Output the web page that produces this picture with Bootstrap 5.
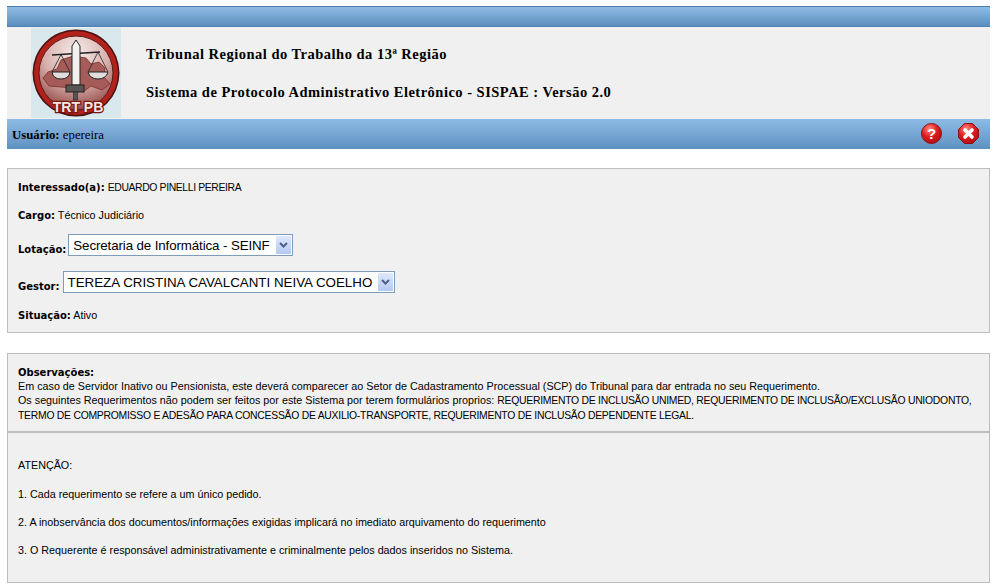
<!DOCTYPE html>
<html lang="pt">

<head>
    <meta charset="UTF-8">
    <title>SISPAE</title>
    <link href="https://cdn.jsdelivr.net/npm/bootstrap@5.3.2/dist/css/bootstrap.min.css" rel="stylesheet">
    <style>
        body {
            background: #fff;
            color: #000;
            font-family: "Liberation Sans", Arial, sans-serif;
            font-size: 10.77px;
            line-height: 13px;
            padding: 6px 10px 0 7px;
        }

        .top-bar {
            height: 21px;
            background: linear-gradient(#8fbce4, #5b8dbd);
            border-top: 1px solid #4a7cab;
            border-bottom: 1px solid #4f82b3;
        }

        .head-box {
            height: 92px;
            background: #f0f0f0;
        }

        .logo-box {
            width: 90px;
            height: 90px;
            margin-left: 24px;
            background: #d8e8ec;
        }

        .head-titles {
            margin-left: 25px;
            font-family: "Liberation Serif", serif;
            font-weight: bold;
            font-size: 14.5px;
            line-height: 18px;
            letter-spacing: .49px;
        }

        .user-bar {
            height: 30px;
            background: linear-gradient(#8dbbe5, #5f91c0);
            font-family: "Liberation Serif", serif;
            font-size: 12.8px;
            padding: 2px 11px 0 5px;
        }

        .panel-box {
            background: #f0f0f0;
            border: 1px solid #bdbdbd;
            padding: 0 10px;
        }

        .lbl {
            font-family: "DejaVu Sans", sans-serif;
            font-weight: bold;
            font-size: 10px;
            line-height: 1;
        }

        .up-text {
            font-size: 10.4px;
            letter-spacing: -.37px;
        }

        .fake-select {
            display: inline-flex;
            align-items: center;
            height: 22px;
            background: #fff;
            border: 1px solid #7f9db9;
            font-size: 13.35px;
            padding: 0 1px 0 4px;
            gap: 6px;
            vertical-align: bottom;
        }

        .sel-narrow {
            margin-left: -1px;
            letter-spacing: -.12px;
        }

        .sel-arrow {
            width: 15px;
            height: 18px;
            background: linear-gradient(#dfe8fb, #b4c8f2);
            border-radius: 1px;
        }

        .panel-one {
            height: 165px;
            margin-top: 19px;
            padding-top: 12px;
        }

        .panel-one p {
            margin: 0;
        }

        .row-cargo { margin-top: 15px !important; }
        .row-lotacao { margin-top: 12px !important; }
        .row-gestor { margin-top: 15px !important; }
        .row-situacao { margin-top: 16px !important; }

        .panel-obs {
            height: 80px;
            margin-top: 20px;
            padding-top: 11px;
            border-bottom-width: 2px;
            line-height: 14px;
        }

        .panel-obs .up-text {
            letter-spacing: -.26px;
        }

        .panel-warn {
            height: 150px;
            border-top: 0;
            padding-top: 26px;
        }

        .panel-warn p {
            margin: 0 0 15px;
        }

        .panel-warn p:first-child {
            margin-bottom: 16px;
        }
    </style>
</head>

<body>
    <div class="top-bar"></div>
    <div class="head-box d-flex align-items-center">
        <div class="logo-box d-flex justify-content-center align-items-center">
            <svg width="90" height="90" viewBox="0 0 90 90">
                <defs>
                    <radialGradient id="disc" cx="50%" cy="22%" r="80%">
                        <stop offset="0" stop-color="#f6ecea" />
                        <stop offset=".55" stop-color="#d8b0ac" />
                        <stop offset="1" stop-color="#8f4440" />
                    </radialGradient>
                </defs>
                <circle cx="45" cy="45" r="43.5" fill="#4a1210" />
                <circle cx="45" cy="45" r="42" fill="#b3211d" />
                <circle cx="45" cy="45" r="37" fill="url(#disc)" stroke="#5a1d1a" stroke-width="1" />
                <path d="M12 50 L17 44 L26 41 L30 32 L42 28 L55 30 L60 36 L68 34 L74 40 L73 49 L79 56 L71 62 L60 58 L52 64 L40 60 L30 59 L18 58 Z" fill="#a55c59" stroke="#7a2d2a" stroke-width=".8" />
                <path d="M21 27 L69 24" stroke="#222" stroke-width="1.6" />
                <path d="M30 26.5 L21 44 M30 26.5 L39 44 M67 24 L57 44 M67 24 L77 44" stroke="#222" stroke-width=".8" fill="none" />
                <path d="M21 44 H39 Q38 51 30 51 Q22 51 21 44 Z M57 44 H77 Q75 51 67 51 Q59 51 57 44 Z" fill="#e2dcdc" stroke="#222" />
                <path d="M41 18 L45 12 L49 18 V57 H41 Z" fill="#f3f0f0" stroke="#222" />
                <rect x="35" y="57" width="18" height="7" fill="#5a5555" stroke="#222" />
                <rect x="42.5" y="64" width="4" height="8" fill="#555" stroke="#222" stroke-width=".6" />
                <text x="47" y="84" text-anchor="middle" font-family="Liberation Sans" font-weight="bold" font-size="14" fill="#f6e6e2" stroke="#7a1512" stroke-width="2.4" paint-order="stroke">TRT PB</text>
            </svg>
        </div>
        <div class="head-titles">
            <div>Tribunal Regional do Trabalho da 13ª Região</div>
            <div class="mt-3 pt-1">Sistema de Protocolo Administrativo Eletrônico - SISPAE : Versão 2.0</div>
        </div>
    </div>
    <div class="user-bar d-flex align-items-center justify-content-between">
        <span><b>Usuário:</b> epereira</span>
        <span class="d-flex gap-3 mb-1">
            <svg width="21" height="21" viewBox="0 0 21 21">
                <defs>
                    <radialGradient id="gloss" cx="40%" cy="28%" r="80%">
                        <stop offset="0" stop-color="#ff8d80" />
                        <stop offset=".5" stop-color="#e01a1e" />
                        <stop offset="1" stop-color="#a80d12" />
                    </radialGradient>
                </defs>
                <circle cx="10.5" cy="10.5" r="10" fill="url(#gloss)" stroke="#8d0f12" />
                <text x="10.5" y="16" text-anchor="middle" font-family="Liberation Sans" font-weight="bold" font-size="15" fill="#fff">?</text>
            </svg>
            <svg width="21" height="21" viewBox="0 0 21 21">
                <path d="M6.5 .5 H14.5 L20.5 6.5 V14.5 L14.5 20.5 H6.5 L.5 14.5 V6.5 Z" fill="url(#gloss)" stroke="#8d0f12" />
                <path d="M7 7 L14 14 M14 7 L7 14" stroke="#fff" stroke-width="3.6" stroke-linecap="round" />
            </svg>
        </span>
    </div>

    <div class="panel-box panel-one">
        <p><span class="lbl">Interessado(a):</span> <span class="up-text">EDUARDO PINELLI PEREIRA</span></p>
        <p class="row-cargo"><span class="lbl">Cargo:</span> Técnico Judiciário</p>
        <p class="row-lotacao"><span class="lbl">Lotação:</span>
            <span class="fake-select sel-narrow">Secretaria de Informática - SEINF
                <span class="sel-arrow d-flex align-items-center justify-content-center">
                    <svg width="9" height="6" viewBox="0 0 9 6"><path d="M1 1 L4.5 4.5 L8 1" fill="none" stroke="#4d6185" stroke-width="2" /></svg>
                </span>
            </span></p>
        <p class="row-gestor"><span class="lbl">Gestor:</span>
            <span class="fake-select">TEREZA CRISTINA CAVALCANTI NEIVA COELHO
                <span class="sel-arrow d-flex align-items-center justify-content-center">
                    <svg width="9" height="6" viewBox="0 0 9 6"><path d="M1 1 L4.5 4.5 L8 1" fill="none" stroke="#4d6185" stroke-width="2" /></svg>
                </span>
            </span></p>
        <p class="row-situacao"><span class="lbl">Situação:</span> Ativo</p>
    </div>

    <div class="panel-box panel-obs">
        <span class="lbl">Observações:</span><br>
        Em caso de Servidor Inativo ou Pensionista, este deverá comparecer ao Setor de Cadastramento Processual (SCP) do Tribunal para dar entrada no seu Requerimento.<br>
        Os seguintes Requerimentos não podem ser feitos por este Sistema por terem formulários proprios: <span class="up-text">REQUERIMENTO DE INCLUSÃO UNIMED, REQUERIMENTO DE INCLUSÃO/EXCLUSÃO UNIODONTO, TERMO DE COMPROMISSO E ADESÃO PARA CONCESSÃO DE AUXILIO-TRANSPORTE, REQUERIMENTO DE INCLUSÃO DEPENDENTE LEGAL.</span>
    </div>
    <div class="panel-box panel-warn">
        <p>ATENÇÃO:</p>
        <p>1. Cada requerimento se refere a um único pedido.</p>
        <p>2. A inobservância dos documentos/informações exigidas implicará no imediato arquivamento do requerimento</p>
        <p>3. O Requerente é responsável administrativamente e criminalmente pelos dados inseridos no Sistema.</p>
    </div>
    <script src="https://cdn.jsdelivr.net/npm/bootstrap@5.3.2/dist/js/bootstrap.bundle.min.js"></script>
</body>

</html>
